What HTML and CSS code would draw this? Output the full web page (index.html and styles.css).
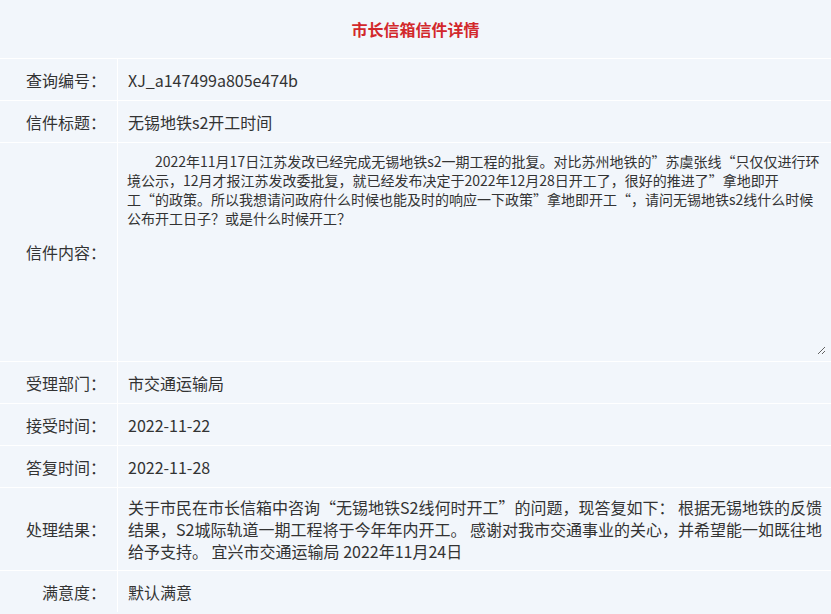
FILE: index.html
```html
<!DOCTYPE html>
<html lang="zh-CN">
<head>
<meta charset="utf-8">
<title>市长信箱信件详情</title>
<link rel="stylesheet" href="styles.css">
</head>
<body>
<div class="detail">
  <div class="title">市长信箱信件详情</div>
  <div class="row">
    <div class="label">查询编号：</div>
    <div class="value">XJ_a147499a805e474b</div>
  </div>
  <div class="row">
    <div class="label">信件标题：</div>
    <div class="value">无锡地铁s2开工时间</div>
  </div>
  <div class="row row-content">
    <div class="label">信件内容：</div>
    <div class="value value-area"><textarea class="content" wrap="off" readonly>　　2022年11月17日江苏发改已经完成无锡地铁s2一期工程的批复。对比苏州地铁的”苏虞张线“只仅仅进行环
境公示，12月才报江苏发改委批复，就已经发布决定于2022年12月28日开工了，很好的推进了”拿地即开
工“的政策。所以我想请问政府什么时候也能及时的响应一下政策”拿地即开工“，请问无锡地铁s2线什么时候
公布开工日子？或是什么时候开工？</textarea></div>
  </div>
  <div class="row">
    <div class="label">受理部门：</div>
    <div class="value">市交通运输局</div>
  </div>
  <div class="row">
    <div class="label">接受时间：</div>
    <div class="value">2022-11-22</div>
  </div>
  <div class="row">
    <div class="label">答复时间：</div>
    <div class="value">2022-11-28</div>
  </div>
  <div class="row">
    <div class="label">处理结果：</div>
    <div class="value">关于市民在市长信箱中咨询“无锡地铁S2线何时开工”的问题，现答复如下： 根据无锡地铁的反馈结果，S2城际轨道一期工程将于今年年内开工。 感谢对我市交通事业的关心，并希望能一如既往地给予支持。 宜兴市交通运输局 2022年11月24日</div>
  </div>
  <div class="row">
    <div class="label">满意度：</div>
    <div class="value">默认满意</div>
  </div>
</div>
</body>
</html>
```
FILE: styles.css
```css
html, body {
  margin: 0;
  padding: 0;
  background: #f2f6fb;
}
body {
  font-family: "Noto Sans CJK SC", "Microsoft YaHei", sans-serif;
  color: #333;
}
.detail {
  display: flex;
  flex-direction: column;
  gap: 1px;
  background: #ffffff;
}
.title {
  height: 58px;
  display: flex;
  align-items: center;
  justify-content: center;
  font-size: 16px;
  font-weight: bold;
  color: #d2282b;
  background: #f2f6fb;
}
.row {
  display: grid;
  grid-template-columns: 117px 1fr;
  column-gap: 1px;
  min-height: 41px;
}
.label, .value {
  background: #f2f6fb;
  display: flex;
  align-items: center;
}
.label {
  justify-content: flex-end;
  padding-right: 11px;
  font-size: 16px;
  color: #333;
}
.value {
  padding: 8px 8px 8px 10px;
  font-size: 16px;
  line-height: 22px;
}
.row-content {
  height: 218px;
}
.value-area {
  padding: 5px 5px 6px 4px;
  align-items: stretch;
}
.content {
  flex: 1;
  resize: both;
  border: none;
  outline: none;
  background: transparent;
  font-family: "Noto Sans CJK SC", "Microsoft YaHei", sans-serif;
  font-size: 14px;
  line-height: 19px;
  color: #333;
  padding: 4px 5px;
  margin: 0;
  overflow: hidden;
  white-space: pre;
}
```
